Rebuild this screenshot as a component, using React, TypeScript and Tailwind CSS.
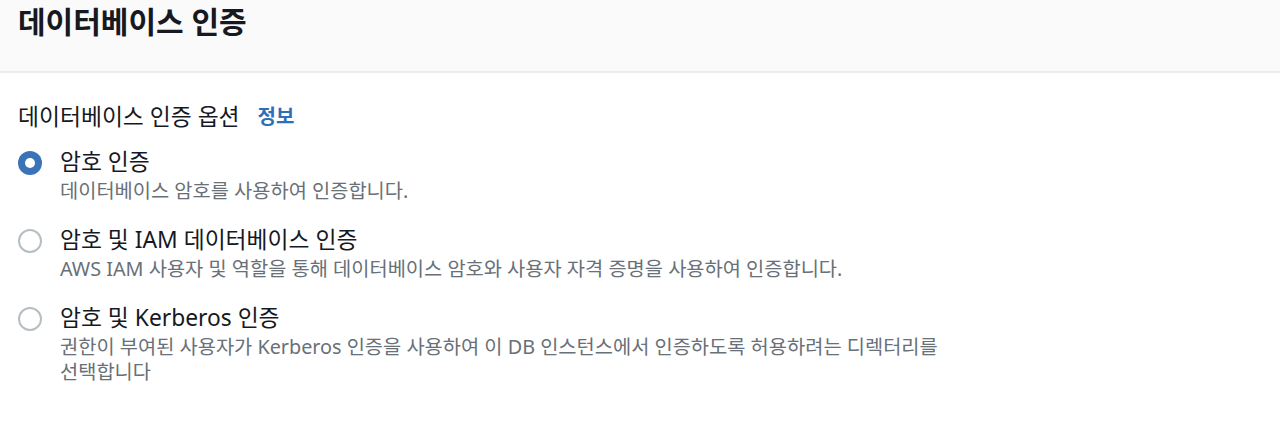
import { useState } from "react";

const FONT = "font-['Noto_Sans','Noto_Sans_CJK_KR',sans-serif]";

type Option = {
  id: string;
  label: string;
  description: string;
};

const options: Option[] = [
  {
    id: "password",
    label: "암호 인증",
    description: "데이터베이스 암호를 사용하여 인증합니다.",
  },
  {
    id: "iam",
    label: "암호 및 IAM 데이터베이스 인증",
    description:
      "AWS IAM 사용자 및 역할을 통해 데이터베이스 암호와 사용자 자격 증명을 사용하여 인증합니다.",
  },
  {
    id: "kerberos",
    label: "암호 및 Kerberos 인증",
    description:
      "권한이 부여된 사용자가 Kerberos 인증을 사용하여 이 DB 인스턴스에서 인증하도록 허용하려는 디렉터리를 선택합니다",
  },
];

function Radio({ checked }: { checked: boolean }) {
  if (checked) {
    return (
      <span className="mt-[5px] flex h-[24px] w-[24px] shrink-0 items-center justify-center rounded-full bg-[#3b73b9]">
        <span className="h-[10px] w-[10px] rounded-full bg-white" />
      </span>
    );
  }
  return (
    <span className="mt-[5px] h-[24px] w-[24px] shrink-0 rounded-full border-2 border-[#b6bec1] bg-white" />
  );
}

export default function App() {
  const [selected, setSelected] = useState("password");

  return (
    <div className={`min-h-[436px] bg-white text-[#16191f] ${FONT}`}>
      {/* Header */}
      <div className="h-[73px] border-b-2 border-[#eaeded] bg-[#fafafa] px-[18px]">
        <h1 className="text-[30px] font-bold leading-[44px]">
          데이터베이스 인증
        </h1>
      </div>

      <div className="px-[18px] pt-[29px]">
        <div className="flex items-center gap-[18px]">
          <span className="text-[22.8px] leading-[28px]">데이터베이스 인증 옵션</span>
          <a className="text-[20px] font-bold text-[#2f6fb7]">정보</a>
        </div>

        <div className="mt-[14px] flex flex-col gap-[21px]">
          {options.map((opt) => (
            <label
              key={opt.id}
              className="flex cursor-pointer gap-[18px]"
              onClick={() => setSelected(opt.id)}
            >
              <Radio checked={selected === opt.id} />
              <div className="max-w-[900px] break-keep">
                <div className="text-[22.8px] leading-[32px]">{opt.label}</div>
                <div className="text-[19.8px] leading-[25px] text-[#687078]">
                  {opt.description}
                </div>
              </div>
            </label>
          ))}
        </div>
      </div>
    </div>
  );
}
